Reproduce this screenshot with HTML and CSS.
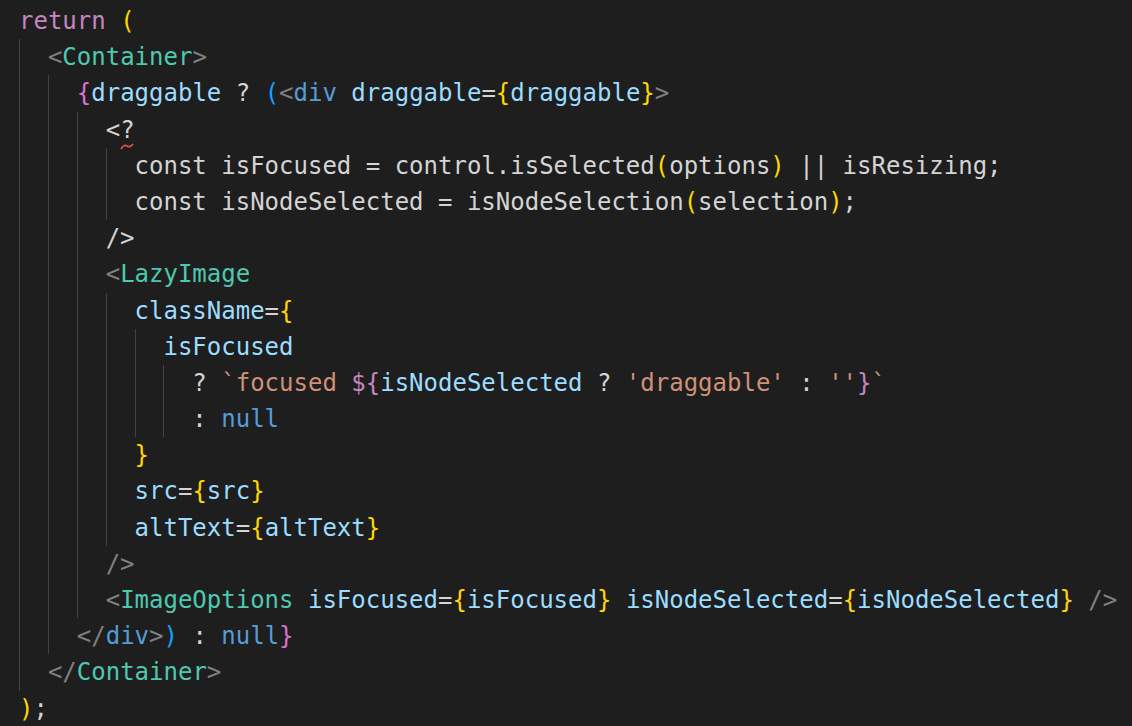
FILE: index.html
```html
<!DOCTYPE html>
<html>
<head>
<meta charset="utf-8">
<link rel="stylesheet" href="styles.css">
</head>
<body>
<div class="editor">
  <div class="line"><span class="code"><span class="kw">return</span> <span class="b1">(</span></span></div>
  <div class="line"><span class="ig"></span><span class="code"><span class="pt">&lt;</span><span class="cmp">Container</span><span class="pt">&gt;</span></span></div>
  <div class="line"><span class="ig"></span><span class="ig"></span><span class="code"><span class="b2">{</span><span class="at">draggable</span> ? <span class="b3">(</span><span class="pt">&lt;</span><span class="tg">div</span> <span class="at">draggable</span>=<span class="b1">{</span><span class="at">draggable</span><span class="b1">}</span><span class="pt">&gt;</span></span></div>
  <div class="line"><span class="ig"></span><span class="ig"></span><span class="ig"></span><span class="code">&lt;<span class="squig">?<svg class="wave" width="14" height="7" viewBox="0 0 14 7"><path d="M1 6 Q4 1 7 3 Q10 5 13 1" fill="none" stroke="#e0514f" stroke-width="1.6"/></svg></span></span></div>
  <div class="line"><span class="ig"></span><span class="ig"></span><span class="ig"></span><span class="ig"></span><span class="code">const isFocused = control.isSelected<span class="b1">(</span>options<span class="b1">)</span> || isResizing;</span></div>
  <div class="line"><span class="ig"></span><span class="ig"></span><span class="ig"></span><span class="ig"></span><span class="code">const isNodeSelected = isNodeSelection<span class="b1">(</span>selection<span class="b1">)</span>;</span></div>
  <div class="line"><span class="ig"></span><span class="ig"></span><span class="ig"></span><span class="code">/&gt;</span></div>
  <div class="line"><span class="ig"></span><span class="ig"></span><span class="ig"></span><span class="code"><span class="pt">&lt;</span><span class="cmp">LazyImage</span></span></div>
  <div class="line"><span class="ig"></span><span class="ig"></span><span class="ig"></span><span class="ig"></span><span class="code"><span class="at">className</span>=<span class="b1">{</span></span></div>
  <div class="line"><span class="ig"></span><span class="ig"></span><span class="ig"></span><span class="ig"></span><span class="ig"></span><span class="code"><span class="at">isFocused</span></span></div>
  <div class="line"><span class="ig"></span><span class="ig"></span><span class="ig"></span><span class="ig"></span><span class="ig"></span><span class="ig"></span><span class="code">? <span class="st">`focused </span><span class="te">${</span><span class="at">isNodeSelected</span> ? <span class="st">'draggable'</span> : <span class="st">''</span><span class="te">}</span><span class="st">`</span></span></div>
  <div class="line"><span class="ig"></span><span class="ig"></span><span class="ig"></span><span class="ig"></span><span class="ig"></span><span class="ig"></span><span class="code">: <span class="tg">null</span></span></div>
  <div class="line"><span class="ig"></span><span class="ig"></span><span class="ig"></span><span class="ig"></span><span class="code"><span class="b1">}</span></span></div>
  <div class="line"><span class="ig"></span><span class="ig"></span><span class="ig"></span><span class="ig"></span><span class="code"><span class="at">src</span>=<span class="b1">{</span><span class="at">src</span><span class="b1">}</span></span></div>
  <div class="line"><span class="ig"></span><span class="ig"></span><span class="ig"></span><span class="ig"></span><span class="code"><span class="at">altText</span>=<span class="b1">{</span><span class="at">altText</span><span class="b1">}</span></span></div>
  <div class="line"><span class="ig"></span><span class="ig"></span><span class="ig"></span><span class="code"><span class="pt">/&gt;</span></span></div>
  <div class="line"><span class="ig"></span><span class="ig"></span><span class="ig"></span><span class="code"><span class="pt">&lt;</span><span class="cmp">ImageOptions</span> <span class="at">isFocused</span>=<span class="b1">{</span><span class="at">isFocused</span><span class="b1">}</span> <span class="at">isNodeSelected</span>=<span class="b1">{</span><span class="at">isNodeSelected</span><span class="b1">}</span> <span class="pt">/&gt;</span></span></div>
  <div class="line"><span class="ig"></span><span class="ig"></span><span class="code"><span class="pt">&lt;/</span><span class="tg">div</span><span class="pt">&gt;</span><span class="b3">)</span> : <span class="tg">null</span><span class="b2">}</span></span></div>
  <div class="line"><span class="ig"></span><span class="code"><span class="pt">&lt;/</span><span class="cmp">Container</span><span class="pt">&gt;</span></span></div>
  <div class="line"><span class="code"><span class="b1">)</span>;</span></div>
</div>
</body>
</html>
```
FILE: styles.css
```css
html, body {
  margin: 0;
  padding: 0;
  background: #1e1e1e;
}
.editor {
  width: 1132px;
  height: 726px;
  overflow: hidden;
  box-sizing: border-box;
  padding: 3px 0 0 19px;
  background: #1e1e1e;
  font-family: "DejaVu Sans Mono", "Liberation Mono", monospace;
  font-size: 24px;
  color: #d4d4d4;
}
.line {
  display: flex;
  height: 36.2px;
  white-space: pre;
}
.ig {
  flex: none;
  width: 2ch;
  box-sizing: border-box;
  border-left: 1px solid #424242;
}
.code {
  line-height: 36.2px;
}
.kw { color: #c586c0; }
.b1 { color: #ffd700; }
.b2 { color: #da70d6; }
.b3 { color: #179fff; }
.pt { color: #808080; }
.cmp { color: #4ec9b0; }
.tg { color: #569cd6; }
.at { color: #9cdcfe; }
.st { color: #ce9178; }
.te { color: #c586c0; }
.squig {
  position: relative;
}
.wave {
  position: absolute;
  left: 0px;
  top: 27px;
}
```
